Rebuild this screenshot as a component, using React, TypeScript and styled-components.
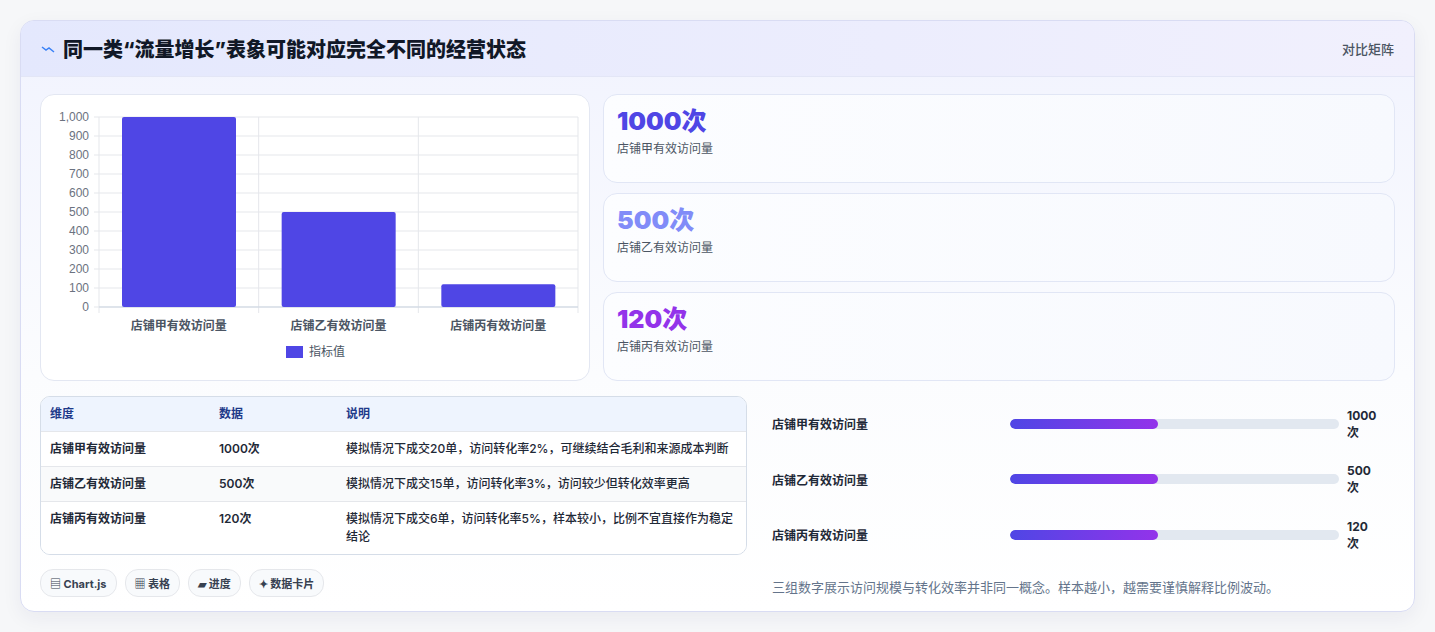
import styled, { createGlobalStyle } from 'styled-components';

const Global = createGlobalStyle`
  body { margin: 0; background: #f3f4f6; font-family: Inter, "Noto Sans CJK SC", sans-serif; }
`;

const Page = styled.div`
  width: 1435px;
  height: 632px;
  padding: 20px;
  box-sizing: border-box;
  background: #f6f7f9;
`;
const Card = styled.div`
  width: 1395px;
  height: 592px;
  border: 1px solid #d9dcf3;
  border-radius: 14px;
  background: linear-gradient(180deg, #f1f3fe 0%, #fbfcfe 60%, #ffffff 100%);
  overflow: hidden;
  box-sizing: border-box;
  box-shadow: 0 6px 20px rgba(30, 40, 90, 0.06);
`;
const Header = styled.div`
  height: 55px;
  display: flex;
  align-items: center;
  justify-content: space-between;
  padding: 0 20px;
  background: linear-gradient(90deg, #e4e8fd 0%, #f1f0fd 100%);
  border-bottom: 1px solid #e3e6f6;
`;
const Title = styled.h1`
  margin: 0;
  font-size: 20px;
  font-weight: 800;
  color: #111827;
  display: flex;
  align-items: center;
  gap: 8px;
`;
const Tag = styled.span`
  font-size: 13px;
  color: #4b5563;
  font-weight: 500;
`;
const Body = styled.div`
  padding: 17px 19px 0;
  display: flex;
  flex-direction: column;
  gap: 15px;
`;
const Row = styled.div`
  display: flex;
  gap: 13px;
`;
const ChartCard = styled.div`
  width: 550px;
  height: 287px;
  background: #fff;
  border: 1px solid #e3e7f2;
  border-radius: 14px;
  box-sizing: border-box;
  flex-shrink: 0;
`;
const Stats = styled.div`
  flex: 1;
  display: flex;
  flex-direction: column;
  gap: 10px;
`;
const Stat = styled.div`
  height: 89px;
  box-sizing: border-box;
  border: 1px solid #e1e6f5;
  border-radius: 14px;
  background: linear-gradient(90deg, #fcfdff, #f7f9fe);
  padding: 10px 13px;
`;
const StatValue = styled.div<{ $c: string }>`
  font-size: 25px;
  font-weight: 900;
  color: ${(p) => p.$c};
  line-height: 32px;
`;
const StatLabel = styled.div`
  font-size: 12px;
  color: #4b5563;
  margin-top: 2px;
`;
const Table = styled.div`
  width: 705px;
  flex-shrink: 0;
  border: 1px solid #d5dde8;
  border-radius: 10px;
  overflow: hidden;
  background: #fff;
  font-size: 12px;
  color: #1f2937;
`;
const TRow = styled.div<{ $head?: boolean; $alt?: boolean }>`
  display: grid;
  grid-template-columns: 169px 127px 1fr;
  padding: 8px 9px;
  line-height: 18px;
  min-height: 18px;
  background: ${(p) => (p.$head ? '#eef4fe' : p.$alt ? '#f9fafb' : '#fff')};
  color: ${(p) => (p.$head ? '#1e3a8a' : '#1f2937')};
  font-weight: ${(p) => (p.$head ? 700 : 600)};
  border-top: ${(p) => (p.$head ? 'none' : '1px solid #e5e7eb')};
  & > span:last-child { font-weight: 500; }
`;
const Right = styled.div`
  flex: 1;
  padding: 0 16px 0 12px;
  display: flex;
  flex-direction: column;
`;
const PRow = styled.div`
  display: grid;
  grid-template-columns: 238px 329px 1fr;
  align-items: center;
  gap: 0;
  height: 55.5px;
  font-size: 12px;
  font-weight: 700;
  color: #1f2937;
  & > span:last-child { padding-left: 8px; }
`;
const Track = styled.div`
  height: 10px;
  border-radius: 5px;
  background: #e2e8f0;
  overflow: hidden;
`;
const Fill = styled.div`
  height: 100%;
  border-radius: 5px;
  background: linear-gradient(90deg, #4f46e5, #9333ea);
`;
const Note = styled.div`
  margin-top: 14px;
  font-size: 13px;
  color: #64748b;
`;
const Chips = styled.div`
  display: flex;
  gap: 8px;
  margin-top: 14px;
`;
const Chip = styled.span`
  height: 26px;
  padding: 0 9px;
  display: inline-flex;
  align-items: center;
  gap: 4px;
  border: 1px solid #e5e7eb;
  border-radius: 13px;
  background: #f8fafc;
  font-size: 11px;
  font-weight: 700;
  color: #374151;
`;
const LeftCol = styled.div`
  display: flex;
  flex-direction: column;
`;

const ticks = [0, 100, 200, 300, 400, 500, 600, 700, 800, 900, 1000];
const bars = [
  { l: '店铺甲有效访问量', v: 1000 },
  { l: '店铺乙有效访问量', v: 500 },
  { l: '店铺丙有效访问量', v: 120 },
];

const Chart = () => {
  const x0 = 58, x1 = 537, y0 = 212, y1 = 22;
  const h = y0 - y1;
  const cw = (x1 - x0) / 3;
  return (
    <svg width="548" height="285" style={{ display: 'block' }}>
      {ticks.map((t) => {
        const y = y0 - (t / 1000) * h;
        return (
          <g key={t}>
            <line x1={x0 - 5} x2={x1} y1={y} y2={y} stroke="#e5e7eb" />
            <text x={x0 - 10} y={y + 4} textAnchor="end" fontSize="12" fill="#6b7280" fontFamily="Liberation Sans, sans-serif">
              {t.toLocaleString('en-US')}
            </text>
          </g>
        );
      })}
      {[0, 1, 2, 3].map((i) => (
        <line key={i} x1={x0 + i * cw} x2={x0 + i * cw} y1={y1} y2={y0 + 6} stroke="#e5e7eb" />
      ))}
      <line x1={x0} x2={x1} y1={y0} y2={y0} stroke="#cbd5e1" />
      {bars.map((b, i) => {
        const bh = (b.v / 1000) * h;
        return (
          <g key={b.l}>
            <rect x={x0 + i * cw + 23} y={y0 - bh} width={114} height={bh} rx="2" fill="#4f46e5" />
            <text x={x0 + i * cw + cw / 2} y={235} textAnchor="middle" fontSize="12" fontWeight="600" fill="#4b5563">
              {b.l}
            </text>
          </g>
        );
      })}
      <rect x="245" y="251" width="17" height="12" fill="#4f46e5" />
      <text x="268" y="261" fontSize="12" fill="#4b5563">指标值</text>
    </svg>
  );
};

export default function App() {
  return (
    <Page>
      <Global />
      <Card>
        <Header>
          <Title>
            <svg width="14" height="10" viewBox="0 0 14 10">
              <path d="M1 3 L5 6 L8 4 L13 8" stroke="#3b82f6" strokeWidth="1.5" fill="none" />
            </svg>
            同一类“流量增长”表象可能对应完全不同的经营状态
          </Title>
          <Tag>对比矩阵</Tag>
        </Header>
        <Body>
          <Row>
            <ChartCard>
              <Chart />
            </ChartCard>
            <Stats>
              <Stat>
                <StatValue $c="#4f46e5">1000次</StatValue>
                <StatLabel>店铺甲有效访问量</StatLabel>
              </Stat>
              <Stat>
                <StatValue $c="#818cf8">500次</StatValue>
                <StatLabel>店铺乙有效访问量</StatLabel>
              </Stat>
              <Stat>
                <StatValue $c="#9333ea">120次</StatValue>
                <StatLabel>店铺丙有效访问量</StatLabel>
              </Stat>
            </Stats>
          </Row>
          <Row>
            <LeftCol>
              <Table>
                <TRow $head>
                  <span>维度</span><span>数据</span><span style={{ fontWeight: 700 }}>说明</span>
                </TRow>
                <TRow>
                  <span>店铺甲有效访问量</span><span>1000次</span>
                  <span>模拟情况下成交20单，访问转化率2%，可继续结合毛利和来源成本判断</span>
                </TRow>
                <TRow $alt>
                  <span>店铺乙有效访问量</span><span>500次</span>
                  <span>模拟情况下成交15单，访问转化率3%，访问较少但转化效率更高</span>
                </TRow>
                <TRow>
                  <span>店铺丙有效访问量</span><span>120次</span>
                  <span>模拟情况下成交6单，访问转化率5%，样本较小，比例不宜直接作为稳定结论</span>
                </TRow>
              </Table>
              <Chips>
                <Chip>▤ Chart.js</Chip>
                <Chip>▦ 表格</Chip>
                <Chip>▰ 进度</Chip>
                <Chip>✦ 数据卡片</Chip>
              </Chips>
            </LeftCol>
            <Right>
              {bars.map((b) => (
                <PRow key={b.l}>
                  <span>{b.l}</span>
                  <Track><Fill style={{ width: '45%' }} /></Track>
                  <span>{b.v}次</span>
                </PRow>
              ))}
              <Note>三组数字展示访问规模与转化效率并非同一概念。样本越小，越需要谨慎解释比例波动。</Note>
            </Right>
          </Row>
        </Body>
      </Card>
    </Page>
  );
}
